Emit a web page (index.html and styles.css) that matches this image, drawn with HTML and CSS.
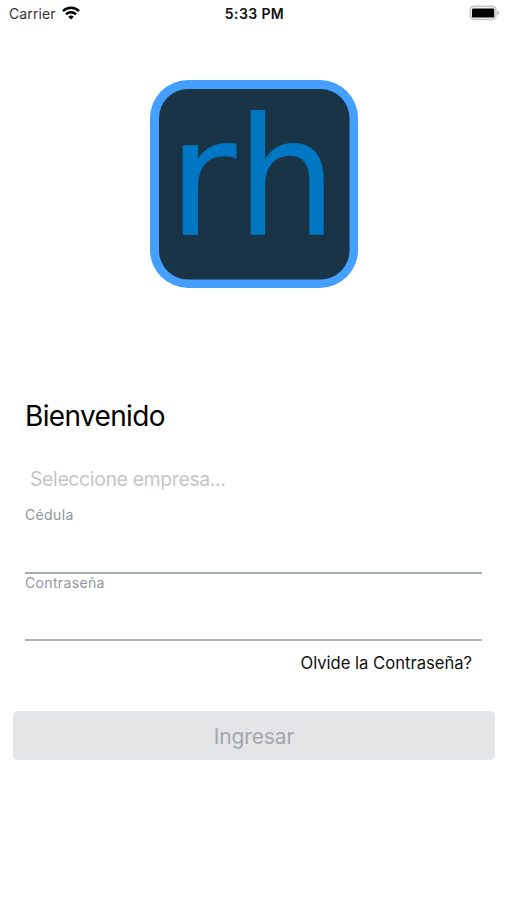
FILE: index.html
```html
<!DOCTYPE html>
<html lang="es">
<head>
  <meta charset="UTF-8">
  <meta name="viewport" content="width=device-width, initial-scale=1.0">
  <title>Bienvenido</title>
  <link rel="stylesheet" href="styles.css">
</head>
<body>

<div class="status-bar">
  <div class="carrier">
    <span class="carrier-name">Carrier</span>
    <svg class="wifi" width="18" height="14" viewBox="0 0 18 14" fill="none" stroke="#000" stroke-width="2.5">
      <path d="M1 5.1a11.3 11.3 0 0 1 16 0"/>
      <path d="M4 8.4a7.1 7.1 0 0 1 10 0"/>
      <path d="M9 13.6L6.2 10.8a4 4 0 0 1 5.6 0z" fill="#000" stroke="none"/>
    </svg>
  </div>
  <span class="time">5:33 PM</span>
  <div class="battery">
    <svg width="31" height="16" viewBox="0 0 31 16">
      <rect x="1.4" y="1.4" width="25.4" height="13" rx="3.6" fill="#fff" stroke="#c8c8c8" stroke-width="1.8"/>
      <rect x="3" y="3.6" width="22.2" height="9" rx="1.2" fill="#000"/>
      <path d="M28.3 5.5q2 .8 2 2.4t-2 2.4z" fill="#bbb"/>
    </svg>
  </div>
</div>

<div class="container">
  <svg class="logo" width="208" height="208" viewBox="0 0 208 208">
    <rect width="208" height="208" rx="38" fill="#459fff"/>
    <rect x="9" y="9" width="190.5" height="190.5" rx="29" fill="#1a3447"/>
    <text class="logo-text" x="17.5" y="154.5" textLength="69" lengthAdjust="spacingAndGlyphs">r</text>
    <text class="logo-text" x="86.3" y="154.5" textLength="101" lengthAdjust="spacingAndGlyphs">h</text>
  </svg>

  <form class="login-form">
    <h1 class="title">Bienvenido</h1>
    <div class="company">Seleccione empresa...</div>
    <label class="label" for="cedula">Cédula</label>
    <input class="input-field" type="text" id="cedula">
    <label class="label" for="password">Contraseña</label>
    <input class="input-field last" type="password" id="password">
    <a class="forgot">Olvide la Contraseña?</a>
  </form>

  <button class="button" disabled>Ingresar</button>
</div>

</body>
</html>
```
FILE: styles.css
```css
* {
  box-sizing: border-box;
}

body {
  font-family: Inter, "Liberation Sans", sans-serif;
  background-color: #fff;
  margin: 0;
  color: #111;
}

.status-bar {
  display: flex;
  height: 28px;
  padding: 0 7px 0 9px;
}

.carrier {
  display: flex;
  flex: 1;
  gap: 6px;
}

.carrier-name {
  font-size: 14px;
  letter-spacing: 0.1px;
  line-height: 28px;
  color: #333;
}

.wifi {
  margin-top: 6px;
}

.time {
  font-size: 14px;
  font-weight: 600;
  letter-spacing: 0.4px;
  line-height: 28px;
}

.battery {
  flex: 1;
  padding-top: 5px;
  text-align: right;
  line-height: 0;
}

.container {
  display: flex;
  flex-direction: column;
}

.logo {
  margin: 52px 0 0 150px;
}

.logo-text {
  font-family: "DejaVu Sans", sans-serif;
  font-size: 163.5px;
  fill: #0077c2;
}

.login-form {
  display: flex;
  flex-direction: column;
  margin: 108px 25px 0;
}

.title {
  font-size: 28px;
  font-weight: 400;
  letter-spacing: -0.65px;
  line-height: 40px;
  color: #000;
  margin: 0;
}

.company {
  font-size: 19.5px;
  letter-spacing: -0.4px;
  line-height: 30px;
  color: #c5c5c9;
  margin: 28px 0 10px;
  padding-left: 5px;
}

.label {
  font-size: 14px;
  letter-spacing: 0.35px;
  line-height: 21px;
  color: #8f979e;
}

.input-field {
  width: 100%;
  height: 49px;
  padding: 0;
  border: none;
  border-bottom: 2px solid #a6abaf;
  outline: none;
  font-size: 18px;
  margin-bottom: -2px;
}

.input-field.last {
  height: 48px;
  border-bottom-color: #b3b3b3;
}

.forgot {
  font-size: 16.6px;
  line-height: 24px;
  margin: 12px 10px 0;
  text-align: right;
}

.button {
  height: 49px;
  margin: 36px 12px 0 13px;
  padding: 1px 0 0;
  background-color: #e3e5e7;
  color: #a2a8ad;
  border: none;
  border-radius: 5px;
  font-family: inherit;
  font-size: 21px;
  letter-spacing: -0.1px;
}
```
